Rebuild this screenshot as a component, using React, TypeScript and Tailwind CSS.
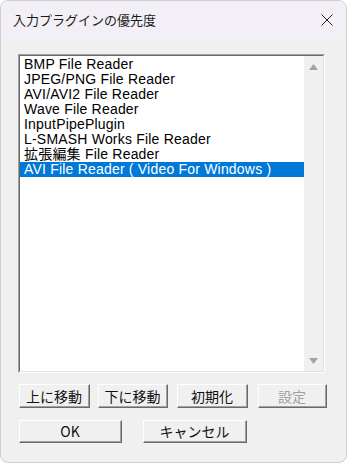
import React from "react";

const items = [
  "BMP File Reader",
  "JPEG/PNG File Reader",
  "AVI/AVI2 File Reader",
  "Wave File Reader",
  "InputPipePlugin",
  "L-SMASH Works File Reader",
  "拡張編集 File Reader",
  "AVI File Reader ( Video For Windows )",
];

const uiFont = {
  fontFamily: '"Liberation Sans", "Noto Sans CJK JP", sans-serif',
};

function Button({
  label,
  width,
  height = "h-[24px]",
  disabled = false,
}: {
  label: string;
  width: string;
  height?: string;
  disabled?: boolean;
}) {
  return (
    <div
      className={`${width} ${height} border border-t-white border-l-white border-r-[#696969] border-b-[#696969] bg-[#f0f0f0]`}
    >
      <div
        className={`w-full h-full flex items-center justify-center border-r border-b border-[#a0a0a0] text-[14px] leading-none ${
          disabled ? "text-[#a0a0a0]" : "text-[#111]"
        }`}
      >
        {label}
      </div>
    </div>
  );
}

export default function App() {
  const selected = 7;

  return (
    <div className="w-[347px] h-[463px] bg-white" style={uiFont}>
      <div className="w-full h-full flex flex-col rounded-lg border border-[#cfcfcf] overflow-hidden bg-[#f0f0f0]">
        {/* Title bar */}
        <div className="h-[37px] shrink-0 flex items-center justify-between pl-[12px] pr-[13px] bg-[#f3eff6]">
          <span
            className="text-[13px] text-[#1b1b1b]"
            style={{ fontFamily: '"Noto Sans CJK JP", sans-serif' }}
          >
            入力プラグインの優先度
          </span>
          <svg width="12" height="12" viewBox="0 0 12 12" className="text-[#222]">
            <path
              d="M0.5 0.5L11.5 11.5M11.5 0.5L0.5 11.5"
              stroke="currentColor"
              strokeWidth="1"
            />
          </svg>
        </div>

        <div className="flex-1 pl-[17px] pt-[16px]">
          {/* List box */}
          <div className="w-[307px] h-[319px] border border-t-[#a0a0a0] border-l-[#a0a0a0] border-r-white border-b-white">
            <div className="w-full h-full flex border border-t-[#696969] border-l-[#696969] border-r-[#e3e3e3] border-b-[#e3e3e3] bg-white">
              <div className="flex-1 pt-[1px]">
                {items.map((item, i) => (
                  <div
                    key={item}
                    className={`h-[15px] pl-[4px] text-[14px] leading-[15px] tracking-[0.2px] whitespace-nowrap ${
                      i === selected
                        ? "bg-[#0078d7] text-white"
                        : "text-black"
                    }`}
                  >
                    {item}
                  </div>
                ))}
              </div>
              {/* Scrollbar */}
              <div className="w-[19px] flex flex-col justify-between items-center bg-[#f0f0f0] pt-[8px] pb-[7px]">
                <svg width="9" height="6" viewBox="0 0 9 6">
                  <path d="M4.5 0L9 6H0Z" fill="#a3a3a3" />
                </svg>
                <svg width="9" height="6" viewBox="0 0 9 6">
                  <path d="M0 0H9L4.5 6Z" fill="#a3a3a3" />
                </svg>
              </div>
            </div>
          </div>

          {/* Order buttons */}
          <div
            className="flex mt-[11px] ml-[1px]"
            style={{ fontFamily: '"Noto Sans CJK JP", sans-serif' }}
          >
            <Button label="上に移動" width="w-[71px]" />
            <div className="w-[8px]" />
            <Button label="下に移動" width="w-[70px]" />
            <div className="w-[9px]" />
            <Button label="初期化" width="w-[71px]" />
            <div className="w-[10px]" />
            <Button label="設定" width="w-[69px]" disabled />
          </div>

          {/* OK / Cancel */}
          <div
            className="flex mt-[12px] ml-[1px]"
            style={{ fontFamily: '"Noto Sans CJK JP", sans-serif' }}
          >
            <Button label="OK" width="w-[103px]" height="h-[23px]" />
            <div className="w-[21px]" />
            <Button label="キャンセル" width="w-[104px]" height="h-[23px]" />
          </div>
        </div>
      </div>
    </div>
  );
}
